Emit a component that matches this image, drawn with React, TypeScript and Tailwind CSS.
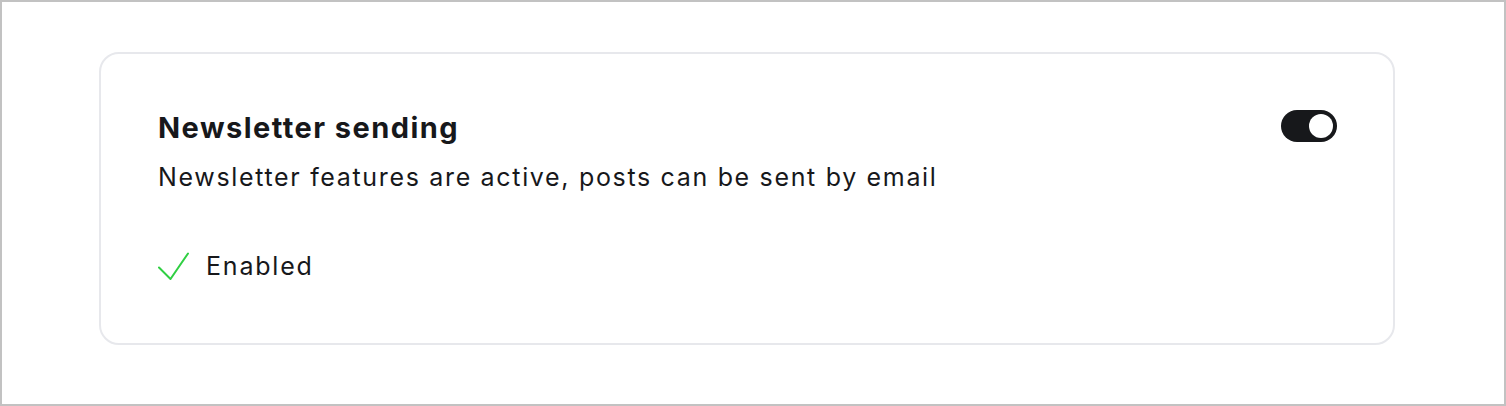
import React from "react";

export default function App() {
  return (
    <div className="w-[1506px] h-[406px] bg-white border-2 border-[#c2c2c2] box-border pl-[97px] pt-[50px] font-['Inter',sans-serif]">
      <div className="w-[1296px] rounded-[20px] border-2 border-[#e7e8ec] pl-[57px] pr-[56px] pt-[56px] pb-[61px] flex items-start justify-between">
        <div className="flex flex-col">
          <h2 className="text-[29px] leading-[36px] font-bold text-[#17181b] tracking-[1.45px]">Newsletter sending</h2>
          <p className="text-[25px] leading-[32px] text-[#17181b] mt-[15px] tracking-[1.67px]">
            Newsletter features are active, posts can be sent by email
          </p>
          <div className="flex items-center gap-[17px] mt-[57px]">
            <svg width="31" height="29" viewBox="0 0 31 29" fill="none">
              <path d="M1 15.5 L12.5 27 L30 1.5" stroke="#30cf43" strokeWidth="2" strokeLinecap="round" strokeLinejoin="round" />
            </svg>
            <span className="text-[25px] leading-[32px] text-[#17181b] tracking-[1.8px]">Enabled</span>
          </div>
        </div>
        <button className="w-[56px] h-[32px] rounded-full bg-[#17181b] flex items-center justify-end px-[4px] shrink-0">
          <span className="w-[24px] h-[24px] rounded-full bg-white block" />
        </button>
      </div>
    </div>
  );
}
